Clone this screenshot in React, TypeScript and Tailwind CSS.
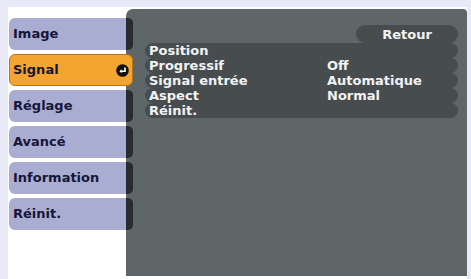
import React from "react";

const tabs = ["Image", "Signal", "Réglage", "Avancé", "Information", "Réinit."];

const rows = [
  { label: "Position", value: "" },
  { label: "Progressif", value: "Off" },
  { label: "Signal entrée", value: "Automatique" },
  { label: "Aspect", value: "Normal" },
  { label: "Réinit.", value: "" },
];

function EnterIcon() {
  return (
    <svg width="13" height="13" viewBox="0 0 13 13">
      <circle cx="6.5" cy="6.5" r="6.3" fill="#111" />
      <path d="M9 3.5 V7.2 H4.6" stroke="#fff" strokeWidth="1.6" fill="none" />
      <path d="M5.6 5.2 L3.4 7.2 L5.6 9.2 Z" fill="#fff" />
    </svg>
  );
}

export default function App() {
  return (
    <div
      className="h-[279px] w-[471px] overflow-hidden bg-[#e9e9f8] pl-[8px] pr-[4px] pt-[7px]"
      style={{ fontFamily: '"DejaVu Sans", sans-serif' }}
    >
      <div className="flex h-full bg-white">
        <div className="relative z-10 flex w-[125px] shrink-0 flex-col gap-[4px] pl-[1px] pt-[11px]">
          {tabs.map((t) =>
            t === "Signal" ? (
              <div
                key={t}
                className="flex h-[32px] items-center justify-between rounded-[6px] border border-[#b87416] bg-[#f4a431] pl-[3px] pr-[3px] text-[13px] font-bold text-[#161630]"
              >
                <span>{t}</span>
                <EnterIcon />
              </div>
            ) : (
              <div key={t} className="flex h-[32px]">
                <div className="flex flex-1 items-center rounded-l-[6px] bg-[#a9add1] pl-[4px] text-[13px] font-bold text-[#161638]">
                  {t}
                </div>
                <div className="w-[7px] rounded-r-[5px] bg-[#2a2b2c]" />
              </div>
            )
          )}
        </div>
        <div className="-ml-[7px] mt-[2px] mb-[3px] flex-1 rounded-tl-[7px] rounded-tr-[4px] bg-[#5f6667] pl-[19px] pr-[9px] pt-[16px] text-[13px] font-bold leading-[15px] text-[#f2f2f2]">
          <div className="flex justify-end">
            <div className="flex h-[18px] w-[102px] items-center justify-center rounded-full bg-[#474d4e] pt-[1px]">
              Retour
            </div>
          </div>
          <div className="flex flex-col">
            {rows.map((r) => (
              <div key={r.label} className="flex h-[15px] items-center rounded-full bg-[#474d4e] pl-[4px]">
                <span className="w-[178px]">{r.label}</span>
                <span>{r.value}</span>
              </div>
            ))}
          </div>
        </div>
      </div>
    </div>
  );
}
